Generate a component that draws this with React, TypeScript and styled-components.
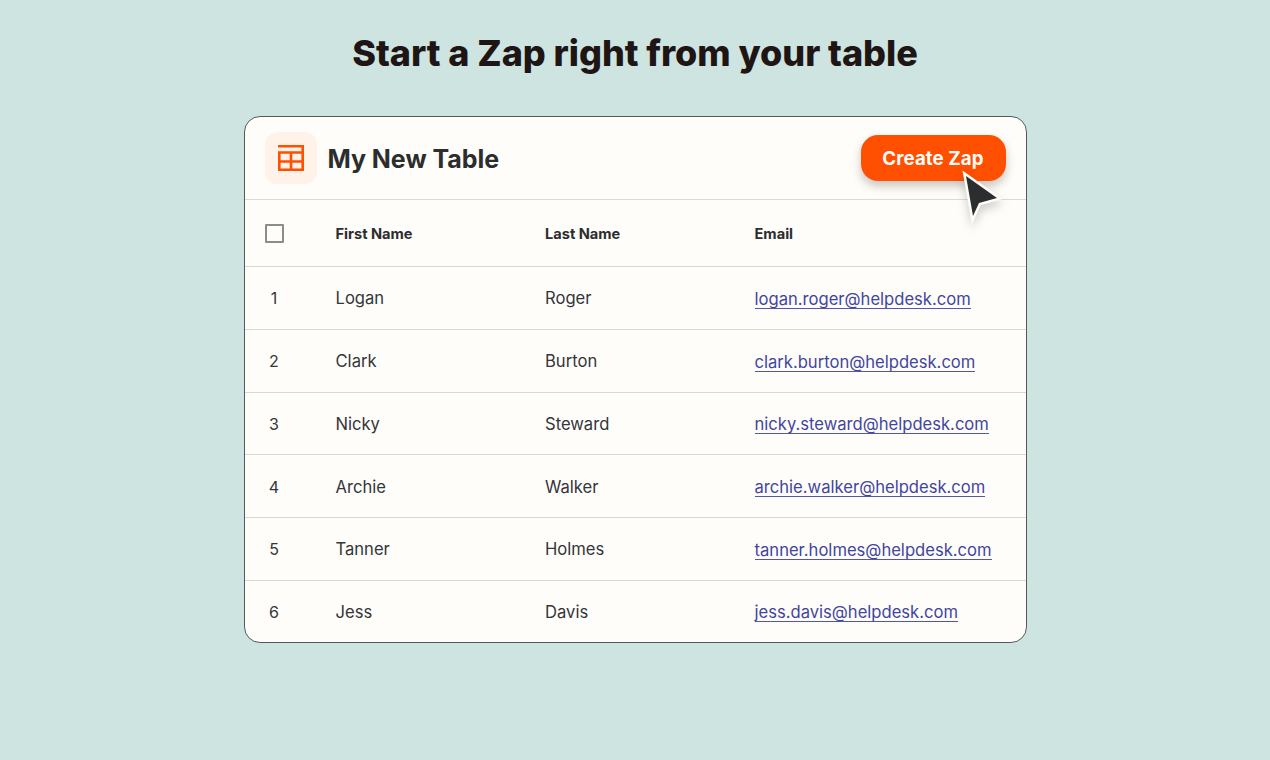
import React from "react";
import styled, { createGlobalStyle } from "styled-components";

const Global = createGlobalStyle`
  html, body { margin: 0; padding: 0; background: #cee4e0; }
  body { font-family: Inter, "Liberation Sans", sans-serif; }
`;

const Page = styled.main`
  width: 1270px;
  height: 760px;
  box-sizing: border-box;
  overflow: hidden;
  padding-top: 31px;
  display: flex;
  flex-direction: column;
  align-items: center;
`;

const Title = styled.h1`
  margin: 0 0 40px;
  height: 45px;
  font-size: 36px;
  line-height: 45px;
  font-weight: 800;
  letter-spacing: -0.04px;
  color: #201515;
`;

const Card = styled.section`
  position: relative;
  width: 783px;
  height: 527px;
  box-sizing: border-box;
  background: #fffdf9;
  border: 1px solid #55585a;
  border-radius: 16px;
  display: flex;
  flex-direction: column;
`;

const Header = styled.header`
  height: 83px;
  flex: none;
  box-sizing: border-box;
  padding: 0 20px;
  border-bottom: 1px solid #d6dcdc;
  display: flex;
  align-items: center;
  justify-content: space-between;
`;

const Brand = styled.div`
  display: flex;
  align-items: center;
  gap: 11px;
`;

const IconTile = styled.div`
  width: 52px;
  height: 52px;
  border-radius: 12px;
  background: #fff3e9;
  display: flex;
  align-items: center;
  justify-content: center;
`;

const TableName = styled.h2`
  margin: 2px 0 0;
  font-size: 25px;
  line-height: 32px;
  font-weight: 700;
  letter-spacing: -0.05px;
  color: #2b2d2e;
`;

const CreateButton = styled.button`
  width: 145px;
  height: 46px;
  border: 0;
  border-radius: 17px;
  background: #ff4f00;
  color: #fffdf9;
  font: 700 18.7px/24px Inter, "Liberation Sans", sans-serif;
  letter-spacing: 0.1px;
  box-shadow: 0 5px 10px rgba(60, 50, 40, 0.28);
  padding: 2px 0 0;
`;

const Cursor = styled.svg`
  position: absolute;
  left: 714px;
  top: 50px;
  width: 48px;
  height: 60px;
  filter: drop-shadow(0 5px 5px rgba(60, 60, 60, 0.25));
`;

const Row = styled.div<{ $height?: number; $last?: boolean; $head?: boolean }>`
  ${(p) => (p.$last ? "flex: 1;" : `height: ${p.$height}px; flex: none;`)}
  box-sizing: border-box;
  display: grid;
  grid-template-columns: 71px 209.5px 209.5px 1fr;
  align-items: center;
  padding-left: 20px;
  padding-top: ${(p) => (p.$head ? "2px" : "1px")};
  border-bottom: ${(p) => (p.$last ? "0" : "1px solid #d9d8d3")};
`;

const HeadCell = styled.div`
  font-size: 14.6px;
  line-height: 20px;
  font-weight: 700;
  color: #2b2d2e;
`;

const Checkbox = styled.span`
  display: block;
  width: 19px;
  height: 19px;
  margin-top: -2px;
  box-sizing: border-box;
  border: 2px solid #8c8c88;
  border-radius: 1px;
  background: #fffdf9;
`;

const Num = styled.div`
  width: 19px;
  text-align: center;
  font-size: 16px;
  line-height: 22px;
  color: #33363a;
`;

const Cell = styled.div`
  font-size: 16.6px;
  line-height: 22px;
  color: #33363a;
`;

const Mail = styled.a`
  font-size: 16.6px;
  line-height: 22px;
  color: #3f46a0;
  text-decoration: none;
  border-bottom: 1px solid #5158a8;
  display: inline-block;
  height: 20px;
`;

const rows = [
  ["Logan", "Roger", "logan.roger@helpdesk.com"],
  ["Clark", "Burton", "clark.burton@helpdesk.com"],
  ["Nicky", "Steward", "nicky.steward@helpdesk.com"],
  ["Archie", "Walker", "archie.walker@helpdesk.com"],
  ["Tanner", "Holmes", "tanner.holmes@helpdesk.com"],
  ["Jess", "Davis", "jess.davis@helpdesk.com"],
];

export default function App() {
  return (
    <Page>
      <Global />
      <Title>Start a Zap right from your table</Title>
      <Card>
        <Header>
          <Brand>
            <IconTile>
              <svg width="26" height="26" viewBox="0 0 26 26" fill="none" stroke="#ff4f00" strokeWidth="2.6">
                <path d="M0 1.3H24.7V24.7H1.3V7.5M0 7.5H25M1 16.5H25M13 7.5V25" />
              </svg>
            </IconTile>
            <TableName>My New Table</TableName>
          </Brand>
          <CreateButton>Create Zap</CreateButton>
        </Header>
        <Cursor viewBox="0 0 48 60">
          <path
            d="M7 9 L38 31 L20 36 L14 49 Z"
            fill="#2b2d2e"
            stroke="#fffdf9"
            strokeWidth="5"
            strokeLinejoin="miter"
            paintOrder="stroke"
          />
        </Cursor>
        <Row $height={67} $head>
          <Checkbox />
          <HeadCell>First Name</HeadCell>
          <HeadCell>Last Name</HeadCell>
          <HeadCell>Email</HeadCell>
        </Row>
        {rows.map((r, i) => (
          <Row key={r[2]} $height={62.75} $last={i === 5}>
            <Num>{i + 1}</Num>
            <Cell>{r[0]}</Cell>
            <Cell>{r[1]}</Cell>
            <div>
              <Mail href="#">{r[2]}</Mail>
            </div>
          </Row>
        ))}
      </Card>
    </Page>
  );
}
